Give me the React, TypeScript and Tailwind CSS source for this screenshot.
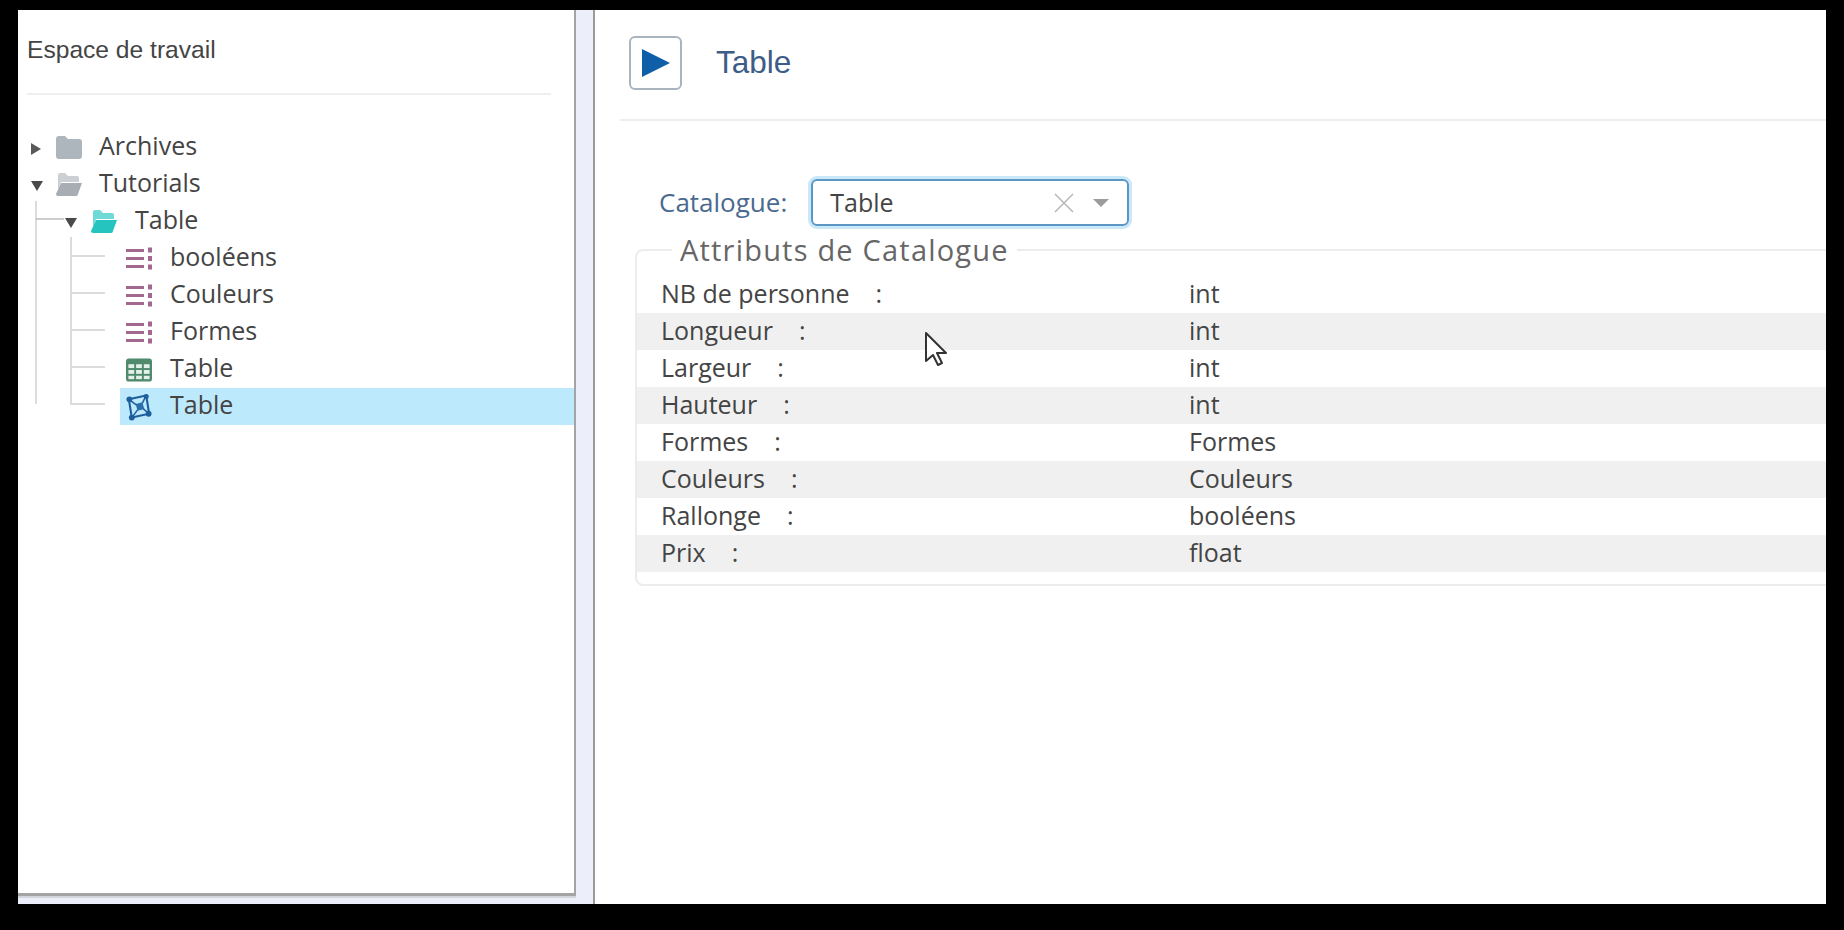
const rows: [string, string][] = [
  ["NB de personne", "int"],
  ["Longueur", "int"],
  ["Largeur", "int"],
  ["Hauteur", "int"],
  ["Formes", "Formes"],
  ["Couleurs", "Couleurs"],
  ["Rallonge", "booléens"],
  ["Prix", "float"],
];

function FolderClosed() {
  return (
    <svg width="28" height="25" viewBox="0 0 28 25" className="block">
      <path d="M1 4a3 3 0 0 1 3-3h6l3 3h11a3 3 0 0 1 3 3v14a3 3 0 0 1-3 3H4a3 3 0 0 1-3-3z" fill="#adb5bd" />
    </svg>
  );
}

function FolderOpen({ color, back }: { color: string; back: string }) {
  return (
    <svg width="28" height="25" viewBox="0 0 28 25" className="block">
      <path d="M3 3a2 2 0 0 1 2-2h5l3 3h9a2 2 0 0 1 2 2v4H6l-3 8z" fill={back} />
      <path d="M6 11h21l-4 11a2 2 0 0 1-2 2H3a2 2 0 0 1-2-2z" fill={color} />
    </svg>
  );
}

function ListIcon() {
  return (
    <svg width="26" height="25" viewBox="0 0 26 25" className="block">
      <g fill="#a3688f">
        <rect x="0" y="3" width="18" height="3" />
        <rect x="0" y="11" width="18" height="3" />
        <rect x="0" y="19" width="18" height="3" />
        <rect x="22" y="1.5" width="4" height="5" />
        <rect x="22" y="10" width="4" height="5" />
        <rect x="22" y="18.5" width="4" height="5" />
      </g>
    </svg>
  );
}

function TableIcon() {
  return (
    <svg width="27" height="24" viewBox="0 0 27 24" className="block">
      <rect x="0" y="0" width="27" height="24" rx="3" fill="#4f8a6c" />
      <g fill="#e4f0ea">
        <rect x="2.5" y="6" width="6" height="4" />
        <rect x="10.5" y="6" width="6" height="4" />
        <rect x="18.5" y="6" width="6" height="4" />
        <rect x="2.5" y="12" width="6" height="4" />
        <rect x="10.5" y="12" width="6" height="4" />
        <rect x="18.5" y="12" width="6" height="4" />
        <rect x="2.5" y="18" width="6" height="3.5" />
        <rect x="10.5" y="18" width="6" height="3.5" />
        <rect x="18.5" y="18" width="6" height="3.5" />
      </g>
    </svg>
  );
}

function CubeIcon() {
  return (
    <svg width="27" height="28" viewBox="0 0 27 28" className="block">
      <path d="M3 6l18-4 3 19-18 4z" fill="none" stroke="#1c5f9c" strokeWidth="2.2" />
      <path d="M10 11l7-2 2 7-7 2z" fill="#2c6ea8" />
      <path d="M3 6l8 6M21 2l-4 8M24 21l-6-5M6 25l6-8" stroke="#1c5f9c" strokeWidth="1.6" />
      <g fill="#1c5f9c">
        <circle cx="3.5" cy="6" r="3" />
        <circle cx="21" cy="3" r="2.6" />
        <circle cx="23.5" cy="21" r="3" />
        <circle cx="6" cy="25" r="3" />
      </g>
    </svg>
  );
}

function ArrowRight() {
  return (
    <svg width="12" height="14" viewBox="0 0 12 14" className="block">
      <path d="M1 1l10 6-10 6z" fill="#5a5a5a" />
    </svg>
  );
}

function ArrowDown() {
  return (
    <svg width="14" height="12" viewBox="0 0 14 12" className="block">
      <path d="M1 1h12l-6 10z" fill="#4a4a4a" />
    </svg>
  );
}

function TreeGuides() {
  const ys = [127, 164, 201, 238, 275];
  return (
    <svg width="120" height="300" viewBox="0 0 120 300" className="absolute left-0 top-0" fill="none">
      <path d="M18 72V275" stroke="#dcdcdc" strokeWidth="2" />
      <path d="M53 108V276" stroke="#dcdcdc" strokeWidth="2" />
      <path d="M18 90H46" stroke="#bdbdbd" strokeWidth="1.5" />
      {ys.map((y) => (
        <path key={y} d={`M53 ${y}H87`} stroke="#dcdcdc" strokeWidth="2" />
      ))}
    </svg>
  );
}

const treeText = "mb-[4px] font-['Open_Sans',sans-serif] text-[25px] leading-[33px] text-[#444]";

function Leaf({ icon, label, selected }: { icon: React.ReactNode; label: string; selected?: boolean }) {
  return (
    <div className={`ml-[102px] flex h-[37px] items-center ${selected ? "bg-[#bde9fd]" : ""}`}>
      <div className="ml-[6px] flex w-[26px] justify-center">{icon}</div>
      <span className={`ml-[18px] ${treeText} ${selected ? "text-[#3a4652]" : ""}`}>{label}</span>
    </div>
  );
}

export default function App() {
  return (
    <div className="flex h-screen w-full bg-black pb-[26px] pl-[18px] pr-[18px] pt-[10px]">
      <div className="flex w-[577px] shrink-0 flex-col border-r-2 border-[#9a9a9a] bg-[#eceef9] pb-[8px] pr-[17px]">
        <div className="flex-1 border-b-[3px] border-r-2 border-[#a4a4a4] bg-white shadow-[0_2px_0_#d4d5dc]">
          <div className="ml-[9px] mr-[23px] mt-[25px] h-[60px] border-b-2 border-[#efefef] font-['Liberation_Sans',sans-serif] text-[24.6px] leading-[30px] text-[#444]">
            Espace de travail
          </div>
          <div className="relative mt-[34px]">
            <TreeGuides />
            <div className="relative flex h-[37px] items-center">
              <div className="ml-[12px] mt-[3px] w-[25px]">
                <ArrowRight />
              </div>
              <FolderClosed />
              <span className={`ml-[16px] ${treeText}`}>Archives</span>
            </div>
            <div className="relative flex h-[37px] items-center">
              <div className="ml-[12px] mt-[2px] w-[25px]">
                <ArrowDown />
              </div>
              <FolderOpen color="#a7adb3" back="#ccd0d4" />
              <span className={`ml-[16px] ${treeText}`}>Tutorials</span>
            </div>
            <div className="relative flex h-[37px] items-center">
              <div className="ml-[46px] mt-[2px] w-[26px]">
                <ArrowDown />
              </div>
              <FolderOpen color="#25c4bf" back="#6fd9d5" />
              <span className={`ml-[17px] ${treeText}`}>Table</span>
            </div>
            <div className="relative">
              <Leaf icon={<ListIcon />} label="booléens" />
              <Leaf icon={<ListIcon />} label="Couleurs" />
              <Leaf icon={<ListIcon />} label="Formes" />
              <Leaf icon={<TableIcon />} label="Table" />
              <Leaf icon={<CubeIcon />} label="Table" selected />
            </div>
          </div>
        </div>
      </div>

      <div className="relative min-w-0 flex-1 overflow-hidden bg-white">
        <div className="ml-[25px] flex h-[111px] items-start border-b-2 border-[#eeeeee]">
          <div className="ml-[9px] mt-[26px] flex h-[54px] w-[53px] items-center justify-center rounded-[6px] border-2 border-[#a9b4bf]">
            <svg width="28" height="28" viewBox="0 0 28 28" className="block">
              <path d="M0 0l28 14L0 28z" fill="#0f5ea8" />
            </svg>
          </div>
          <div className="ml-[34px] mt-[34px] font-['Liberation_Sans',sans-serif] text-[31.5px] leading-[36px] text-[#3d5c87]">
            Table
          </div>
        </div>

        <div className="ml-[64px] mt-[58px] flex h-[47px] items-center">
          <span className="font-['Open_Sans',sans-serif] text-[26px] text-[#4a6a90]">Catalogue:</span>
          <div className="ml-[24px] flex h-[47px] w-[318px] items-center rounded-[6px] border-2 border-[#5c96c4] pl-[17px] pr-[18px] shadow-[0_0_0_3px_#c9e8f9]">
            <span className="flex-1 font-['Open_Sans',sans-serif] text-[25px] text-[#444]">Table</span>
            <svg width="20" height="20" viewBox="0 0 20 20" className="block">
              <path d="M1 1l18 18M19 1L1 19" stroke="#b9b9b9" strokeWidth="1.6" />
            </svg>
            <svg width="16" height="8" viewBox="0 0 16 8" className="ml-[19px] block">
              <path d="M0 0h16L8 8z" fill="#9c9c9c" />
            </svg>
          </div>
        </div>

        <fieldset className="-mr-[10px] ml-[40px] mt-[9px] h-[351px] rounded-[8px] border-2 border-[#ececec] p-0">
          <legend className="ml-[35px] px-[8px] font-['Open_Sans',sans-serif] text-[29px] leading-[30px] tracking-[1.2px] text-[#666]">
            Attributs de Catalogue
          </legend>
          <div className="mt-[11px]">
            {rows.map(([name, type], i) => (
              <div
                key={name}
                className={`flex h-[37px] items-center pl-[24px] font-['Open_Sans',sans-serif] text-[25px] text-[#444] ${i % 2 === 1 ? "bg-[#f0f0f0]" : ""}`}
              >
                <span className="mb-[2px] w-[528px] whitespace-nowrap">
                  {name}
                  <span className="ml-[26px]">:</span>
                </span>
                <span className="mb-[2px]">{type}</span>
              </div>
            ))}
          </div>
        </fieldset>

        <svg width="24" height="36" viewBox="0 0 24 36" className="absolute left-[329px] top-[321px]">
          <path d="M2 2v28l7-6 5 10 4-2-5-10h9z" fill="#fff" stroke="#333" strokeWidth="2" strokeLinejoin="round" />
        </svg>
      </div>
    </div>
  );
}
